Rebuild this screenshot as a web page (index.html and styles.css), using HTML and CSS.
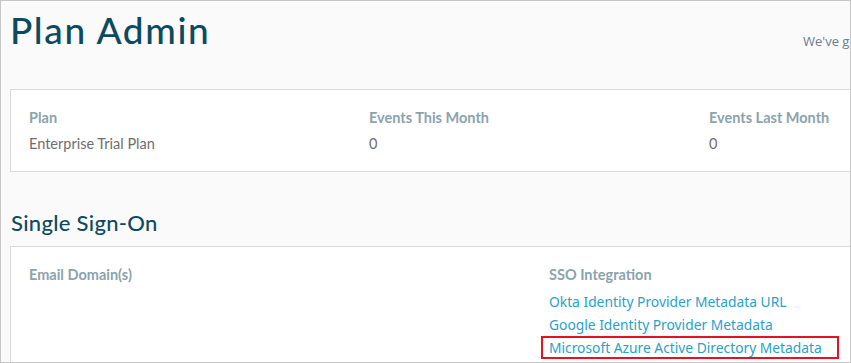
FILE: index.html
```html
<!DOCTYPE html>
<html lang="en">
<head>
    <meta charset="UTF-8">
    <meta name="viewport" content="width=device-width, initial-scale=1.0">
    <title>Plan Admin</title>
    <link rel="stylesheet" href="styles.css">
</head>
<body>

    <div class="frame">
        <div class="page">
            <header class="page-header">
                <h1>Plan Admin</h1>
                <p class="notice">We've got you covered with a plan that fits your team.</p>
            </header>

            <div class="card plan-card">
                <div class="col">
                    <div class="label">Plan</div>
                    <div class="value">Enterprise Trial Plan</div>
                </div>
                <div class="col">
                    <div class="label">Events This Month</div>
                    <div class="value">0</div>
                </div>
                <div class="col">
                    <div class="label">Events Last Month</div>
                    <div class="value">0</div>
                </div>
            </div>

            <h2>Single Sign-On</h2>

            <div class="card sso-card">
                <div class="sso-col">
                    <div class="label">Email Domain(s)</div>
                </div>
                <div class="sso-col">
                    <div class="label">SSO Integration</div>
                    <ul class="links">
                        <li><a href="#">Okta Identity Provider Metadata URL</a></li>
                        <li><a href="#">Google Identity Provider Metadata</a></li>
                        <li class="marked"><a href="#">Microsoft Azure Active Directory Metadata</a></li>
                    </ul>
                </div>
            </div>
        </div>
    </div>

</body>
</html>
```

FILE: styles.css
```css
body {
    margin: 0;
    padding: 0;
    background-color: #fff;
    font-family: 'Lato', sans-serif;
}
.frame {
    width: 851px;
    height: 363px;
    box-sizing: border-box;
    border: 1px solid #c6c6c6;
    background-color: #fafafa;
    overflow: hidden;
}
.page {
    width: 1100px;
    padding-left: 9px;
}
.page-header {
    display: flex;
    align-items: flex-start;
    height: 88px;
}
h1 {
    margin: 0;
    padding-top: 6px;
    width: 793px;
    flex-shrink: 0;
    font-size: 37px;
    font-weight: 500;
    letter-spacing: 1.6px;
    color: #0d4a5f;
}
.notice {
    margin: 31px 0 0 0;
    font-family: 'Open Sans', sans-serif;
    font-size: 13px;
    color: #6b7b8c;
    white-space: nowrap;
}
.card {
    background-color: #fff;
    border: 1px solid #d9d9d9;
    display: flex;
}
.plan-card {
    padding: 18px 18px 17px;
}
.col {
    width: 340px;
}
.label {
    font-size: 14.5px;
    font-weight: bold;
    line-height: 20px;
    color: #8ba3ad;
}
.value {
    margin-top: 6px;
    font-size: 14.5px;
    line-height: 20px;
    color: #6e6e6e;
}
h2 {
    margin: 0;
    padding: 37px 0 0 1px;
    height: 37px;
    font-size: 22px;
    font-weight: 500;
    letter-spacing: 0.3px;
    color: #0d4a5f;
}
.sso-card {
    padding: 18px 18px 40px;
}
.sso-col {
    width: 520px;
}
.links {
    list-style-type: none;
    margin: 5px 0 0 0;
    padding: 0;
    font-family: 'Noto Sans', sans-serif;
    font-size: 13.8px;
    line-height: 23px;
}
.links li {
    height: 23px;
}
.links a {
    color: #2a9fcb;
    text-decoration: none;
}
.links .marked {
    box-sizing: border-box;
    margin-left: -8px;
    width: 298px;
    height: 23px;
    padding-left: 6px;
    border: 2px solid #e81123;
    line-height: 19px;
}
```
